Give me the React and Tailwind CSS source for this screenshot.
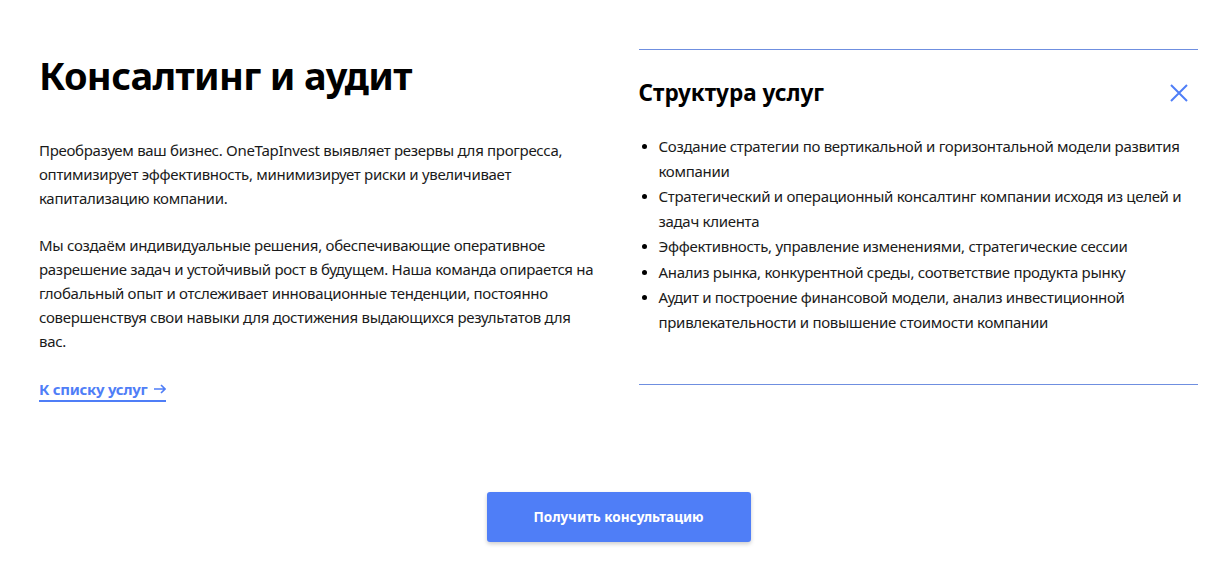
import React from 'react';

const services = [
  'Создание стратегии по вертикальной и горизонтальной модели развития компании',
  'Стратегический и операционный консалтинг компании исходя из целей и задач клиента',
  'Эффективность, управление изменениями, стратегические сессии',
  'Анализ рынка, конкурентной среды, соответствие продукта рынку',
  'Аудит и построение финансовой модели, анализ инвестиционной привлекательности и повышение стоимости компании',
];

export default function App() {
  return (
    <div className="min-h-[582px] bg-white pl-[39px] pr-[33px] text-[#111] font-['Noto_Sans','Open_Sans',sans-serif]">
      <div className="grid grid-cols-2 items-start gap-10 pt-[49px]">
        <div>
          <h1 className="mt-[2px] text-[38px] leading-[48px] font-bold tracking-[-0.65px] text-black">
            Консалтинг и аудит
          </h1>
          <div className="mt-[39px] text-[15px] leading-[24px] tracking-[-0.3px] text-[#1a1a1a]">
            <p>
              Преобразуем ваш бизнес. OneTapInvest выявляет резервы для прогресса, оптимизирует
              эффективность, минимизирует риски и увеличивает капитализацию компании.
            </p>
            <p className="mt-[23px]">
              Мы создаём индивидуальные решения, обеспечивающие оперативное разрешение задач и
              устойчивый рост в будущем. Наша команда опирается на глобальный опыт и отслеживает
              инновационные тенденции, постоянно совершенствуя свои навыки для достижения
              выдающихся результатов для вас.
            </p>
          </div>
          <a
            href="#"
            className="mt-[25px] inline-flex items-center gap-[7px] text-[15px] leading-[22px] font-bold tracking-[-0.3px] text-[#4f7ef7] border-b-2 border-[#4f7ef7]"
          >
            К списку услуг
            <svg width="12" height="10" viewBox="0 0 12 10" fill="none" stroke="currentColor" strokeWidth="1.6">
              <path d="M0 5h11M7 1l4 4-4 4" />
            </svg>
          </a>
        </div>

        <div className="border-t border-b border-[#6f8fe0] pb-[50px]">
          <div className="flex items-center justify-between pt-[29px]">
            <h2 className="text-[22.5px] leading-[28px] font-bold text-black">Структура услуг</h2>
            <button className="mr-[8px] text-[#4f7ef7]">
              <svg width="22" height="22" viewBox="0 0 22 22" fill="none" stroke="currentColor" strokeWidth="2">
                <path d="M3 3l16 16M19 3L3 19" />
              </svg>
            </button>
          </div>
          <ul className="mt-[27px] space-y-[1px] text-[15px] leading-[24.5px] tracking-[-0.3px] text-[#1a1a1a]">
            {services.map((s) => (
              <li key={s} className="relative pl-[20px]">
                <span className="absolute left-[3px] top-[10px] h-[5px] w-[5px] rounded-full bg-black" />
                {s}
              </li>
            ))}
          </ul>
        </div>
      </div>

      <div className="mt-[90px] flex justify-center pb-[40px]">
        <button className="h-[50px] w-[264px] rounded-[3px] bg-[#4f7ef7] text-[13.5px] font-bold text-white shadow-[0_2px_4px_rgba(0,0,0,0.2)]">
          Получить консультацию
        </button>
      </div>
    </div>
  );
}
